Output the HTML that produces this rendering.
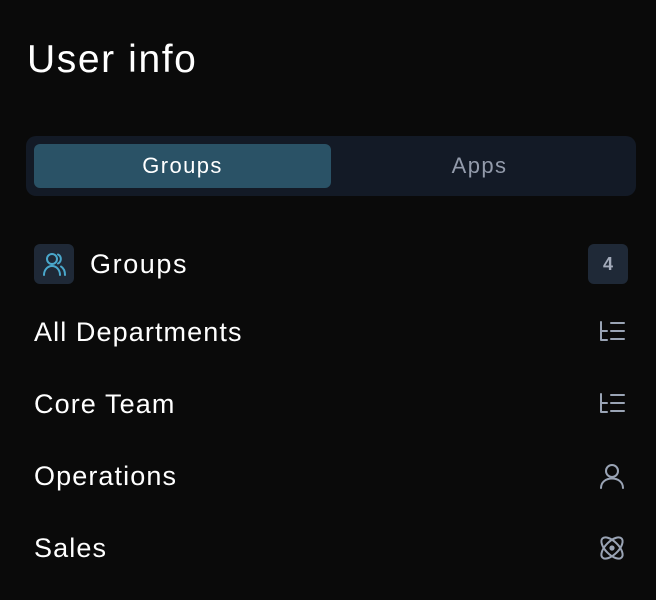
<!DOCTYPE html>
<html><head><style>
body{margin:0;width:656px;height:600px;background:#0a0a0a;font-family:"Liberation Sans",sans-serif;color:#fff;position:relative;overflow:hidden}
.a{position:absolute;white-space:nowrap}
.title{left:27px;top:36px;font-size:39px;line-height:48px;letter-spacing:1.6px}
.tabs{left:26px;top:136px;width:610px;height:60px;background:#131a26;border-radius:10px}
.act{left:34px;top:144px;width:297px;height:44px;background:#2a5266;border-radius:6px;font-size:22px;line-height:44px;text-align:center;letter-spacing:1.4px}
.apps{left:331px;top:144px;width:297px;height:44px;font-size:22px;line-height:44px;text-align:center;color:#939bab;letter-spacing:1.4px}
.ib{left:34px;top:244px;width:40px;height:40px;background:#1f2937;border-radius:6px}
.badge{left:588px;top:244px;width:40px;height:40px;background:#1f2937;border-radius:6px;color:#a3abba;font-weight:bold;font-size:18px;line-height:40px;text-align:center}
.t{font-size:27px;line-height:32px;letter-spacing:1.1px}
svg.ic{position:absolute;left:598px;width:28px;height:28px;fill:none;stroke:#9aa4b5;stroke-width:2;stroke-linecap:round;stroke-linejoin:round}
</style></head><body>
<div class="a title">User info</div>
<div class="a tabs"></div>
<div class="a act">Groups</div>
<div class="a apps">Apps</div>
<div class="a ib"><svg width="40" height="40" viewBox="0 0 40 40" fill="none" stroke="#4aa8cc" stroke-width="2" stroke-linecap="round"><circle cx="18" cy="15" r="5"/><path d="M10 31c0-5 3.5-9 8-9s8 4 8 9"/><path d="M24 10.5a5 5 0 0 1 0 9"/><path d="M27 22.5c2.5 1.5 4 4.5 4 8.5"/></svg></div>
<div class="a t" style="left:90px;top:248px;letter-spacing:1.6px">Groups</div>
<div class="a badge">4</div>
<div class="a t" style="left:34px;top:316px">All Departments</div>
<div class="a t" style="left:34px;top:388px">Core Team</div>
<div class="a t" style="left:34px;top:460px">Operations</div>
<div class="a t" style="left:34px;top:532px">Sales</div>
<svg class="ic" style="top:318px" viewBox="0 0 28 28"><path d="M3 4v18h6M3 13h6M13 5h13M13 13h13M13 21h13"/></svg>
<svg class="ic" style="top:390px" viewBox="0 0 28 28"><path d="M3 4v18h6M3 13h6M13 5h13M13 13h13M13 21h13"/></svg>
<svg class="ic" style="top:462px" viewBox="0 0 28 28"><circle cx="14" cy="9" r="6"/><path d="M3 26c0-6 5-9.5 11-9.5s11 3.5 11 9.5"/></svg>
<svg class="ic" style="top:534px" viewBox="0 0 28 28"><ellipse cx="14" cy="14" rx="13.5" ry="6.5" transform="rotate(45 14 14)"/><ellipse cx="14" cy="14" rx="13.5" ry="6.5" transform="rotate(-45 14 14)"/><circle cx="14" cy="14" r="1.6" fill="#9aa4b5"/></svg>
</body></html>
